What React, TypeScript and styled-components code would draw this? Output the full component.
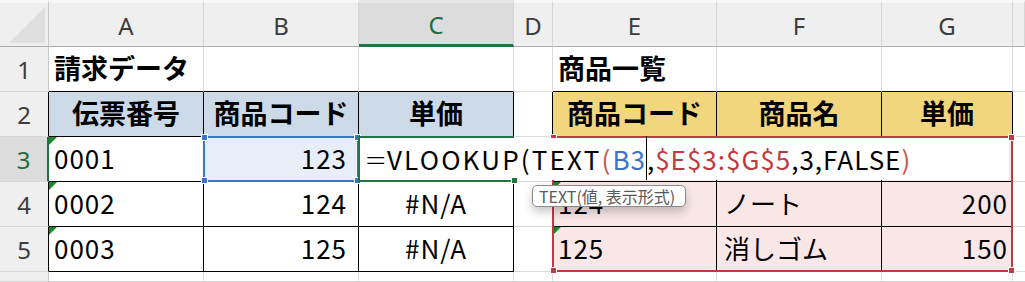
import React from 'react';
import styled, { createGlobalStyle, css } from 'styled-components';

const GlobalStyle = createGlobalStyle`
  html, body { margin: 0; padding: 0; background: #ffffff; }
  body { font-family: "Noto Sans CJK JP", "Noto Sans", sans-serif; }
  * { box-sizing: border-box; }
`;

const GRID = '#dadada';
const BLACK = '#000000';
const GREEN = '#217346';
const BLUE = '#3b74c9';
const RED = '#c0393f';

const Sheet = styled.div`
  display: grid;
  grid-template-columns: 49px 155px 155px 155px 39px 164px 165px 131px 12px;
  grid-template-rows: 47px repeat(5, 45px) 10px;
  width: 1025px;
  height: 282px;
  overflow: hidden;
  background: #fff;
`;

const Corner = styled.div`
  grid-column: 1;
  grid-row: 1;
  position: relative;
  background: #efefef;
  border-top: 3px solid #f6f7f9;
  border-right: 1px solid #c8c8c8;
  border-bottom: 1px solid #acacac;
  &::after {
    content: '';
    position: absolute;
    right: 3px;
    bottom: 3px;
    width: 0;
    height: 0;
    border-left: 36px solid transparent;
    border-bottom: 36px solid #dfdfdf;
  }
`;

const ColHead = styled.div<{ $c: number; $active?: boolean }>`
  grid-column: ${(p) => p.$c};
  grid-row: 1;
  display: flex;
  align-items: center;
  justify-content: center;
  padding-top: 2px;
  background: ${(p) => (p.$active ? '#dcdcdc' : '#efefef')};
  color: ${(p) => (p.$active ? '#1d6b40' : '#3c3c3c')};
  border-top: 3px solid ${(p) => (p.$active ? '#e6e6e6' : '#f6f7f9')};
  border-right: 1px solid #d6d6d6;
  border-bottom: ${(p) => (p.$active ? `3px solid ${GREEN}` : '1px solid #acacac')};
  font-family: "Noto Sans", "Open Sans", sans-serif;
  font-size: 24px;
`;

const RowHead = styled.div<{ $r: number; $active?: boolean; $edge: string }>`
  grid-column: 1;
  grid-row: ${(p) => p.$r};
  display: flex;
  align-items: center;
  justify-content: center;
  background: ${(p) => (p.$active ? '#dcdcdc' : '#efefef')};
  color: ${(p) => (p.$active ? '#1d6b40' : '#3c3c3c')};
  border-right: ${(p) => (p.$active ? `2px solid ${GREEN}` : `1px solid ${p.$edge}`)};
  border-bottom: 1px solid #d6d6d6;
  font-family: "Noto Sans", "Open Sans", sans-serif;
  font-size: 24px;
`;

type Align = 'left' | 'center' | 'right';

const Cell = styled.div<{
  $c: number;
  $r: number;
  $bg: string;
  $br: string;
  $bb: string;
  $align: Align;
  $bold?: boolean;
  $flag?: boolean;
  $pl: number;
  $pr: number;
  $latin?: boolean;
}>`
  grid-column: ${(p) => p.$c};
  grid-row: ${(p) => p.$r};
  position: relative;
  display: flex;
  align-items: center;
  justify-content: ${(p) =>
    p.$align === 'right' ? 'flex-end' : p.$align === 'center' ? 'center' : 'flex-start'};
  padding: 0 ${(p) => p.$pr}px 3px ${(p) => p.$pl}px;
  background: ${(p) => p.$bg};
  border-right: 1px solid ${(p) => p.$br};
  border-bottom: 1px solid ${(p) => p.$bb};
  color: #000;
  font-size: ${(p) => (p.$bold ? 27 : 26)}px;
  font-weight: ${(p) => (p.$bold ? 700 : 400)};
  letter-spacing: ${(p) => (p.$latin ? '1px' : '0')};
  white-space: nowrap;
  overflow: hidden;
  ${(p) =>
    p.$flag &&
    css`
      &::before {
        content: '';
        position: absolute;
        left: 0;
        top: 0;
        width: 0;
        height: 0;
        border-top: 8px solid #168a1e;
        border-right: 8px solid transparent;
      }
    `}
`;

const RangeBox = styled.div<{ $c: string; $r: string; $color: string }>`
  grid-column: ${(p) => p.$c};
  grid-row: ${(p) => p.$r};
  margin: -1px 0 0 -1px;
  position: relative;
  z-index: 2;
  border: 2px solid ${(p) => p.$color};
  pointer-events: none;
`;

const ActiveBox = styled.div`
  grid-column: 4;
  grid-row: 4;
  margin: -1px 0 0 -1px;
  position: relative;
  z-index: 4;
  border: 2px solid ${GREEN};
  border-right: none;
  pointer-events: none;
`;

const Handle = styled.span<{ $color: string; $v: 'top' | 'bottom'; $h: 'left' | 'right' }>`
  position: absolute;
  width: 7px;
  height: 7px;
  background: ${(p) => p.$color};
  border: 1px solid #fff;
  ${(p) => p.$v}: -4px;
  ${(p) => p.$h}: -4px;
`;

const Editor = styled.div`
  grid-column: 4 / 9;
  grid-row: 4;
  margin: 1px 4px 2px 1px;
  position: relative;
  z-index: 3;
  background: #fff;
  display: flex;
  align-items: center;
  padding: 0 0 2px 6px;
  font-size: 26px;
  letter-spacing: 1px;
  white-space: nowrap;
  color: #000;
`;

const Tok = styled.span<{ $color?: string; $wide?: number }>`
  color: ${(p) => p.$color || '#000'};
  ${(p) =>
    p.$wide !== undefined &&
    css`
      letter-spacing: ${p.$wide}px;
    `}
`;

const Equals = styled.span`
  display: inline-block;
  transform: scaleX(1.4);
  transform-origin: left center;
  margin-right: 6px;
  font-weight: 300;
`;

const Caret = styled.span`
  display: inline-block;
  width: 1px;
  height: 44px;
  background: #000;
  align-self: stretch;
  margin: -2px 0 -2px 0;
`;

const Tooltip = styled.div`
  grid-column: 6;
  grid-row: 5;
  justify-self: start;
  align-self: start;
  margin: 3px 0 0 -21px;
  position: relative;
  z-index: 6;
  width: 154px;
  height: 22px;
  display: flex;
  align-items: center;
  padding: 0 6px 1px 6px;
  background: #fff;
  border: 1px solid #8c8c8c;
  border-radius: 5px;
  box-shadow: 0 5px 10px rgba(0, 0, 0, 0.22);
  color: #5a5a5a;
  font-size: 16px;
  white-space: nowrap;
`;

type Spec = {
  text?: string;
  bold?: boolean;
  align?: Align;
  flag?: boolean;
  pl?: number;
  pr?: number;
  latin?: boolean;
};

const content: Record<string, Spec> = {
  '1-1': { text: '請求データ', bold: true, pl: 5 },
  '5-1': { text: '商品一覧', bold: true, pl: 5 },
  '1-2': { text: '伝票番号', bold: true, align: 'center' },
  '2-2': { text: '商品コード', bold: true, align: 'center' },
  '3-2': { text: '単価', bold: true, align: 'center' },
  '5-2': { text: '商品コード', bold: true, align: 'center' },
  '6-2': { text: '商品名', bold: true, align: 'center' },
  '7-2': { text: '単価', bold: true, align: 'center' },
  '1-3': { text: '0001', flag: true, latin: true, pl: 5 },
  '2-3': { text: '123', align: 'right', latin: true, pr: 11 },
  '1-4': { text: '0002', flag: true, latin: true, pl: 5 },
  '2-4': { text: '124', align: 'right', latin: true, pr: 11 },
  '3-4': { text: '#N/A', align: 'center', latin: true },
  '5-4': { text: '124', flag: true, latin: true, pl: 5 },
  '6-4': { text: 'ノート', pl: 7 },
  '7-4': { text: '200', align: 'right', latin: true, pr: 4 },
  '1-5': { text: '0003', flag: true, latin: true, pl: 5 },
  '2-5': { text: '125', align: 'right', latin: true, pr: 11 },
  '3-5': { text: '#N/A', align: 'center', latin: true },
  '5-5': { text: '125', flag: true, latin: true, pl: 5 },
  '6-5': { text: '消しゴム', pl: 7 },
  '7-5': { text: '150', align: 'right', latin: true, pr: 4 },
};

const inTable = (c: number, r: number) =>
  ((c >= 1 && c <= 3) || (c >= 5 && c <= 7)) && r >= 2 && r <= 5;

const fillOf = (c: number, r: number) => {
  if (r === 2 && c >= 1 && c <= 3) return '#ccd9e7';
  if (r === 2 && c >= 5 && c <= 7) return '#f1d67e';
  if (r >= 3 && r <= 5 && c >= 5 && c <= 7) return '#f9e7e8';
  if (r === 3 && c === 2) return '#e8eef8';
  return '#ffffff';
};

const COL_LETTERS = ['A', 'B', 'C', 'D', 'E', 'F', 'G'];

export default function App() {
  const cells: React.ReactNode[] = [];
  for (let r = 1; r <= 6; r++) {
    for (let c = 1; c <= 8; c++) {
      const spec = content[`${c}-${r}`] || {};
      const br = inTable(c, r) || inTable(c + 1, r) ? BLACK : GRID;
      const bb = inTable(c, r) || inTable(c, r + 1) ? BLACK : GRID;
      cells.push(
        <Cell
          key={`${c}-${r}`}
          $c={c + 1}
          $r={r + 1}
          $bg={fillOf(c, r)}
          $br={br}
          $bb={bb}
          $align={spec.align || 'left'}
          $bold={spec.bold}
          $flag={spec.flag}
          $pl={spec.pl ?? 6}
          $pr={spec.pr ?? 6}
          $latin={spec.latin}
        >
          {spec.text}
        </Cell>
      );
    }
  }

  return (
    <>
      <GlobalStyle />
      <Sheet>
        <Corner />
        {COL_LETTERS.map((l, i) => (
          <ColHead key={l} $c={i + 2} $active={l === 'C'}>
            {l}
          </ColHead>
        ))}
        <ColHead $c={9} />
        {[1, 2, 3, 4, 5, 6].map((n) => (
          <RowHead key={n} $r={n + 1} $active={n === 3} $edge={inTable(1, n) ? BLACK : '#c8c8c8'}>
            {n <= 5 ? n : ''}
          </RowHead>
        ))}
        {cells}

        <RangeBox $c="6 / 9" $r="4 / 7" $color={RED}>
          <Handle $color={RED} $v="top" $h="left" />
          <Handle $color={RED} $v="top" $h="right" />
          <Handle $color={RED} $v="bottom" $h="left" />
          <Handle $color={RED} $v="bottom" $h="right" />
        </RangeBox>

        <RangeBox $c="3" $r="4" $color={BLUE}>
          <Handle $color={BLUE} $v="top" $h="left" />
          <Handle $color={BLUE} $v="top" $h="right" />
          <Handle $color={BLUE} $v="bottom" $h="left" />
          <Handle $color={BLUE} $v="bottom" $h="right" />
        </RangeBox>

        <Editor>
          <Equals>=</Equals>
          <Tok $wide={2.2}>VLOOKUP(TEXT</Tok>
          <Tok $color="#c8564a" $wide={2.2}>(</Tok>
          <Tok $color={BLUE}>B3</Tok>
          <Caret />
          <Tok>,</Tok>
          <Tok $color={RED}>$E$3:$G$5</Tok>
          <Tok>,3,FALSE</Tok>
          <Tok $color="#c8564a">)</Tok>
        </Editor>

        <ActiveBox>
          <Handle $color={GREEN} $v="bottom" $h="right" />
        </ActiveBox>

        <Tooltip>TEXT(値, 表示形式)</Tooltip>
      </Sheet>
    </>
  );
}
